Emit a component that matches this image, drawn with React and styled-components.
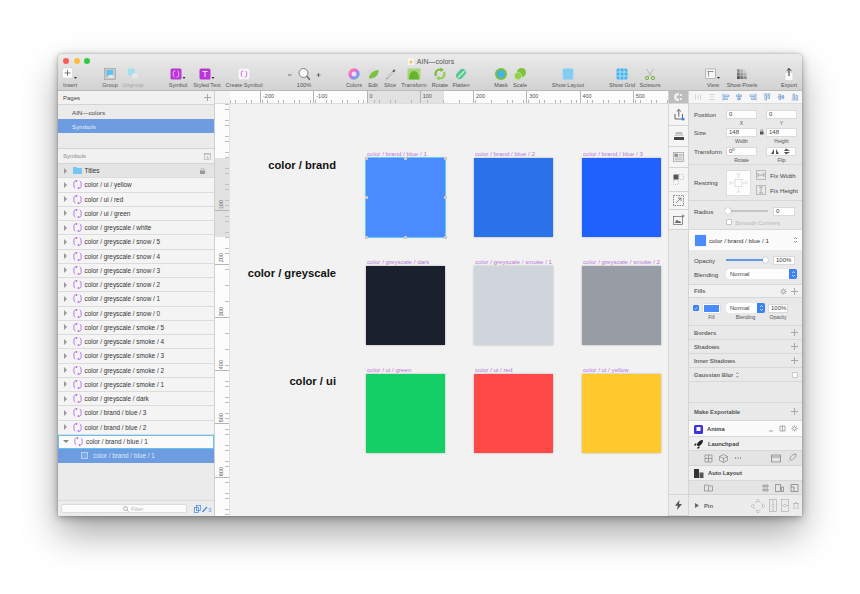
import React from 'react';
import styled, { createGlobalStyle } from 'styled-components';

const GlobalStyle = createGlobalStyle`
  html, body { margin: 0; padding: 0; background: #fff; }
  body { font-family: "Liberation Sans", Arial, sans-serif; color: #333; -webkit-font-smoothing: antialiased; }
  * { box-sizing: border-box; }
`;

const Page = styled.div`
  width: 860px;
  height: 594px;
  padding: 54px 58px 0;
  overflow: hidden;
  background: #fff;
`;

const Win = styled.div`
  width: 744px;
  height: 462px;
  border-radius: 4px 4px 2px 2px;
  overflow: hidden;
  display: flex;
  flex-direction: column;
  background: #f2f2f2;
  box-shadow: 0 18px 36px rgba(0, 0, 0, 0.34), 0 2px 8px rgba(0, 0, 0, 0.3), 0 0 2px rgba(0, 0, 0, 0.3);
`;

/* ---------- title bar and toolbar ---------- */

const Toolbar = styled.header`
  height: 37px;
  flex: none;
  background: linear-gradient(#ebebeb, #d2d2d2);
  border-bottom: 1px solid #b9b9b9;
`;

const TitleBar = styled.div`
  height: 12px;
  position: relative;
  display: flex;
  align-items: center;
  justify-content: center;
  gap: 3px;
  padding: 2px 0 0 2px;
  font-size: 7px;
  color: #555;
`;

const Lights = styled.div`
  position: absolute;
  left: 5px;
  top: 4px;
  display: flex;
  gap: 4.5px;
`;

const Light = styled.span`
  width: 6px;
  height: 6px;
  border-radius: 50%;
  background: ${(p) => p.$c};
`;

const ToolRow = styled.div`
  display: flex;
  height: 25px;
`;

const Tool = styled.div`
  width: ${(p) => p.$w}px;
  margin-left: ${(p) => p.$gap}px;
  flex: none;
  display: flex;
  flex-direction: column;
  align-items: center;
  justify-content: flex-end;
  padding-bottom: 3px;
  gap: 1px;
  font-size: 5.6px;
  line-height: 6px;
  white-space: nowrap;
  color: ${(p) => (p.$dim ? '#a5a5a5' : '#555')};
`;

const ToolIcon = styled.div`
  height: 15px;
  display: flex;
  align-items: center;
  justify-content: center;
`;

const Sym = ({ size = 9, color = '#b060e0', sw = 0.9 }) => (
  <svg width={size} height={size} viewBox="0 0 10 10" fill="none" stroke={color} strokeWidth={sw}>
    <path d="M4.5 1H3C1.700 1 1 1.800 1 3v3.500C1 7.700 1.500 8.500 2.500 9" />
    <path d="M3.200 .2L4.700 1 3.200 2" />
    <path d="M5.500 9H7C8.300 9 9 8.200 9 7V3.500C9 2.300 8.500 1.500 7.500 1" />
    <path d="M6.800 8.200L5.300 9 6.800 9.800" />
  </svg>
);

const Svg = ({ w = 14, h = 14, vb, children }) => (
  <svg width={w} height={h} viewBox={vb || `0 0 ${w} ${h}`} fill="none">{children}</svg>
);

const toolIcons = {
  insert: (
    <Svg w={16} h={14}>
      <rect x="0.5" y="1" width="10" height="10" rx="1.5" fill="#fff" stroke="#ccc" strokeWidth=".5" />
      <path d="M5.5 3v6M2.5 6h6" stroke="#555" strokeWidth=".8" />
      <polygon points="12,10 15,10 13.5,12" fill="#333" />
    </Svg>
  ),
  group: (
    <Svg>
      <rect x="1.5" y="1.5" width="11" height="11" fill="#c9c9c9" stroke="#a8a8a8" strokeWidth=".8" />
      <rect x="3.5" y="3" width="6.5" height="6" fill="#5cc4f0" />
      <rect x="5.5" y="8" width="5" height="3" fill="#e8e8e8" />
    </Svg>
  ),
  ungroup: (
    <Svg>
      <rect x="2" y="1.5" width="7" height="7" rx="1" fill="#a6dcee" />
      <rect x="6" y="6.5" width="6" height="5" fill="#e5e5e5" />
    </Svg>
  ),
  symbol: (
    <Svg w={16}>
      <rect x=".5" y="1.5" width="11" height="11" rx="1.5" fill="#b937d6" />
      <path d="M5.500 4H4.500C3.700 4 3.300 4.500 3.300 5.200V8.500C3.300 9.200 3.700 9.700 4.500 10M6.500 10H7.500C8.300 10 8.700 9.500 8.700 8.800V5.500C8.700 4.800 8.300 4.300 7.500 4" stroke="#f2d0fa" strokeWidth=".8" />
      <polygon points="12.5,10 15.5,10 14,12" fill="#333" />
    </Svg>
  ),
  text: (
    <Svg w={16}>
      <rect x=".5" y="1.5" width="11" height="11" rx="1.5" fill="#b937d6" />
      <path d="M3.500 4.500h5M6 4.500v5.500" stroke="#fff" strokeWidth=".9" />
      <polygon points="12.5,10 15.5,10 14,12" fill="#333" />
    </Svg>
  ),
  create: (
    <Svg>
      <rect x="1.5" y="1.5" width="11" height="11" rx="1.5" fill="#fafafa" stroke="#ddd" strokeWidth=".5" />
      <path d="M6.500 4H5.500C4.700 4 4.300 4.500 4.300 5.200V8.500C4.300 9.200 4.700 9.700 5.500 10M7.500 10H8.500C9.300 10 9.700 9.500 9.700 8.800V5.500C9.700 4.800 9.300 4.300 8.500 4" stroke="#c65fe6" strokeWidth=".9" />
    </Svg>
  ),
  zoom: (
    <Svg w={34}>
      <path d="M1 8h3.500M29.500 8h4M31.500 6v4" stroke="#555" strokeWidth=".8" />
      <circle cx="16.5" cy="6" r="4.5" fill="#f7f7f7" stroke="#666" strokeWidth=".8" />
      <path d="M19.800 9.200l3 3.600" stroke="#555" strokeWidth="1.3" />
    </Svg>
  ),
  colors: (
    <Svg>
      <defs>
        <linearGradient id="cw" x1="0" y1="0" x2="1" y2="1">
          <stop offset="0" stopColor="#f9a13a" />
          <stop offset=".35" stopColor="#f06bd0" />
          <stop offset=".65" stopColor="#8c8cf5" />
          <stop offset="1" stopColor="#5fdc8c" />
        </linearGradient>
      </defs>
      <circle cx="7" cy="7" r="5.7" fill="url(#cw)" />
      <circle cx="7" cy="7" r="2.5" fill="#fff" opacity=".75" />
    </Svg>
  ),
  edit: (
    <Svg>
      <circle cx="6.500" cy="7" r="5.500" fill="#d9d9d9" />
      <path d="M3 11.500C3 7 7 3.500 12.500 3C13 8 9 12 3 11.500Z" fill="#7fc241" />
    </Svg>
  ),
  slice: (
    <Svg>
      <path d="M3 12L11 2.500l1.200 1L5 11.500Z" fill="#f4f4f4" stroke="#777" strokeWidth=".5" />
      <path d="M9.500 4.500L11 2.500l1.200 1L10.800 5.500Z" fill="#555" />
    </Svg>
  ),
  transform: (
    <Svg w={16} h={14}>
      <rect x="1.500" y="1.500" width="13" height="11" fill="#a7d677" />
      <path d="M3 12.500C3 7 5 4 8 4s5 3 5 8.500Z" fill="#66b32e" />
    </Svg>
  ),
  rotate: (
    <Svg>
      <path d="M3 9A4.500 4.500 0 0 1 8 2.600" stroke="#76bd3a" strokeWidth="2.100" />
      <path d="M11 5A4.500 4.500 0 0 1 6 11.400" stroke="#8ccf4c" strokeWidth="2.100" />
      <polygon points="7.5,0.5 11,3 7.5,5" fill="#76bd3a" />
      <polygon points="6.5,9 3,11 6.5,13.5" fill="#8ccf4c" />
    </Svg>
  ),
  flatten: (
    <Svg>
      <rect x="1.500" y="3.500" width="11" height="7" rx="3.500" transform="rotate(-45 7 7)" fill="#53c79c" />
      <path d="M4 10.500L10.500 4" stroke="#d9f2b0" strokeWidth="1.200" />
    </Svg>
  ),
  mask: (
    <Svg>
      <circle cx="7" cy="7" r="6" fill="#7cbe3e" />
      <rect x="3.500" y="3.500" width="7" height="7" rx="1.500" fill="#3fb4ee" />
    </Svg>
  ),
  scale: (
    <Svg>
      <circle cx="8.500" cy="5.500" r="4.500" fill="#7cc23d" />
      <circle cx="5" cy="9" r="3.700" fill="#93d14d" stroke="#d5eeb5" strokeWidth=".5" />
    </Svg>
  ),
  layout: (
    <Svg>
      <rect x="1.500" y="1.500" width="11" height="11" rx="1.500" fill="#8fd1f2" />
      <path d="M4 1.500v11M7 1.500v11M10 1.500v11" stroke="#5db5e6" strokeWidth=".6" />
    </Svg>
  ),
  grid: (
    <Svg>
      <rect x="1.500" y="1.500" width="11" height="11" rx="1.500" fill="#49b3ec" />
      <path d="M5 1.500v11M9 1.500v11M1.500 5h11M1.500 9h11" stroke="#d5effb" strokeWidth=".7" />
    </Svg>
  ),
  scissors: (
    <Svg>
      <path d="M3.500 2l5 7.500M10.500 2l-5 7.500" stroke="#b9b9b9" strokeWidth="1" />
      <circle cx="4" cy="11" r="1.600" stroke="#6db339" />
      <circle cx="10" cy="11" r="1.600" stroke="#6db339" />
    </Svg>
  ),
  view: (
    <Svg w={16}>
      <rect x=".8" y="2" width="9.500" height="9.500" fill="#f6f6f6" stroke="#888" strokeWidth=".5" />
      <path d="M2.500 4.500h6M3.500 4.500v5" stroke="#666" strokeWidth=".7" />
      <polygon points="12,10 15,10 13.5,12" fill="#333" />
    </Svg>
  ),
  pixels: (
    <Svg>
      <defs>
        <linearGradient id="px" x1="1" y1="0" x2="0" y2="1">
          <stop offset="0" stopColor="#eee" />
          <stop offset="1" stopColor="#444" />
        </linearGradient>
      </defs>
      <rect x="2" y="2" width="10" height="10" fill="url(#px)" />
      <path d="M5.300 2v10M8.600 2v10M2 5.300h10M2 8.600h10" stroke="#fff" strokeWidth=".3" />
    </Svg>
  ),
  exportIcon: (
    <Svg>
      <rect x="3.500" y="6" width="7" height="7" fill="#f8f8f8" />
      <path d="M7 9V1.500M4.700 3.800L7 1.500l2.300 2.300" stroke="#222" strokeWidth=".9" />
    </Svg>
  ),
};

const tools = [
  ['Insert', 2, 20, 'insert'],
  ['Group', 19, 22, 'group'],
  ['Ungroup', 1, 22, 'ungroup', true],
  ['Symbol', 23, 22, 'symbol'],
  ['Styled Text', 1, 34, 'text'],
  ['Create Symbol', 1, 38, 'create'],
  ['100%', 22, 38, 'zoom'],
  ['Colors', 21, 20, 'colors'],
  ['Edit', 1, 16, 'edit'],
  ['Slice', 1, 16, 'slice'],
  ['Transform', 1, 30, 'transform'],
  ['Rotate', 1, 20, 'rotate'],
  ['Flatten', 1, 20, 'flatten'],
  ['Mask', 20, 20, 'mask'],
  ['Scale', 1, 16, 'scale'],
  ['Show Layout', 20, 40, 'layout'],
  ['Show Grid', 19, 30, 'grid'],
  ['Scissors', 1, 24, 'scissors'],
  ['View', 41, 20, 'view'],
  ['Show Pixels', 1, 36, 'pixels'],
  ['Export', 17, 24, 'exportIcon'],
];

/* ---------- body ---------- */

const Body = styled.div`
  flex: 1;
  min-height: 0;
  display: flex;
`;

const Left = styled.aside`
  width: 157px;
  flex: none;
  display: flex;
  flex-direction: column;
  background: #ebebeb;
  border-right: 1px solid #d0d0d0;
`;

const PanelHead = styled.div`
  height: ${(p) => p.$h}px;
  flex: none;
  display: flex;
  align-items: center;
  justify-content: space-between;
  padding: 0 3px 0 5px;
  font-size: 6px;
  background: #f1f1f1;
  color: ${(p) => p.$c || '#444'};
  border-bottom: 1px solid #d4d4d4;
`;

const PageItem = styled.div`
  height: 14px;
  display: flex;
  align-items: center;
  padding-left: 14px;
  font-size: 6.2px;
  color: ${(p) => (p.$on ? '#e8f0fb' : '#444')};
  background: ${(p) => (p.$on ? '#6d9de0' : 'transparent')};
`;

const PagesGap = styled.div`
  height: 16px;
  flex: none;
  border-bottom: 1px solid #d4d4d4;
`;

const LayerList = styled.div`
  flex: 1;
`;

const Layer = styled.div`
  height: 14.26px;
  display: flex;
  align-items: center;
  font-size: 6.4px;
  white-space: nowrap;
  padding-left: ${(p) => (p.$child ? 23 : 6)}px;
  color: ${(p) => (p.$child ? '#dfe9f9' : '#333')};
  background: ${(p) => (p.$child ? '#6d9de0' : p.$sel ? '#fbfbfb' : p.$folder ? '#e4e4e4' : '#f4f4f4')};
  border-bottom: 1px solid ${(p) => (p.$child ? '#6d9de0' : '#dcdcdc')};
  outline: ${(p) => (p.$sel ? '1px solid #66c0ec' : 'none')};
  outline-offset: -1px;
`;

const Arrow = styled.span`
  width: 0;
  height: 0;
  flex: none;
  margin-right: 5.5px;
  ${(p) =>
    p.$open
      ? 'border-left: 3px solid transparent; border-right: 3px solid transparent; border-top: 3px solid #8a8a8a; margin-left: -1px; margin-right: 5px;'
      : 'border-top: 3px solid transparent; border-bottom: 3px solid transparent; border-left: 3.5px solid #999;'}
`;

const LayerIcon = styled.span`
  width: 9px;
  height: 9px;
  flex: none;
  margin-right: 3px;
  display: flex;
  align-items: center;
  justify-content: center;
`;

const ChildBox = styled.span`
  width: 7px;
  height: 7px;
  flex: none;
  margin-right: 5px;
  border: 0.7px solid #b9cff0;
  background: #7ea9e5;
`;

const Lock = styled.span`
  margin-left: auto;
  margin-right: 9px;
  display: flex;
`;

const FilterBar = styled.div`
  height: 16px;
  flex: none;
  display: flex;
  align-items: center;
  gap: 7px;
  padding: 0 2px 0 3px;
  background: #ececec;
  border-top: 1px solid #dadada;
`;

const FilterBox = styled.div`
  flex: 1;
  height: 9px;
  border-radius: 2px;
  background: #fbfbfb;
  border: 0.5px solid #dcdcdc;
  display: flex;
  align-items: center;
  justify-content: center;
  gap: 2px;
  padding-left: 18px;
  font-size: 5.5px;
  color: #b8b8b8;
`;

/* ---------- canvas ---------- */

const Center = styled.main`
  flex: 1;
  min-width: 0;
  display: grid;
  grid-template-columns: 15px 1fr;
  grid-template-rows: 13px 1fr;
  background: #f2f2f2;
`;

const RulerCorner = styled.div`
  background: #f4f4f4;
  border-bottom: 1px solid #ddd;
`;

const HRuler = styled.div`
  display: flex;
  padding-left: 30px;
  overflow: hidden;
  background:
    repeating-linear-gradient(90deg, #b5b5b5 0 0.6px, transparent 0.6px 5.33px) 0 100% / 100% 3px no-repeat,
    linear-gradient(90deg, transparent 137px, #e2e2e2 137px 214px, transparent 214px),
    #fcfcfc;
  border-bottom: 1px solid #ddd;
`;

const HTick = styled.div`
  width: 53.25px;
  flex: none;
  padding: 2px 0 0 2px;
  font-size: 5.5px;
  line-height: 6px;
  color: #555;
  border-left: 0.6px solid #b5b5b5;
`;

const VRuler = styled.div`
  display: flex;
  flex-direction: column;
  overflow: hidden;
  padding-top: 54px;
  background:
    repeating-linear-gradient(180deg, #c0c0c0 0 0.6px, transparent 0.6px 5.33px) 100% 0 / 4px 100% no-repeat,
    linear-gradient(180deg, transparent 54px, #e2e2e2 54px 133px, transparent 133px),
    #fcfcfc;
  border-right: 1px solid #e2e2e2;
`;

const VTick = styled.div`
  height: 53.3px;
  flex: none;
  display: flex;
  align-items: flex-end;
  justify-content: flex-start;
  padding-bottom: 1px;
  border-bottom: 0.6px solid #b5b5b5;
`;

const VLabel = styled.span`
  writing-mode: vertical-rl;
  transform: rotate(180deg);
  font-size: 5.5px;
  line-height: 8px;
  color: #555;
  margin-left: 2px;
`;

const Canvas = styled.div`
  padding: 54px 7px 0 0;
  display: grid;
  grid-template-columns: 106px 79px 79px 79px;
  grid-auto-rows: 79px;
  row-gap: 29px;
  column-gap: 29px;
  justify-content: end;
`;

const RowTitle = styled.div`
  margin-right: 1px;
  padding-top: 1px;
  text-align: right;
  font-size: 11.2px;
  font-weight: 700;
  line-height: 13px;
  color: #111;
  white-space: nowrap;
  direction: ltr;
  display: flex;
  justify-content: flex-end;
`;

const Artboard = styled.div`
  position: relative;
  background: ${(p) => p.$c};
  box-shadow: 0 0 2px rgba(0, 0, 0, 0.28);
  outline: ${(p) => (p.$sel ? '1px solid #6dc9f2' : 'none')};
`;

const ArtLabel = styled.span`
  position: absolute;
  left: 1px;
  top: -8.5px;
  font-size: 6.2px;
  line-height: 7px;
  color: #b678d8;
  white-space: nowrap;
`;

const Handle = styled.span`
  position: absolute;
  width: 3px;
  height: 3px;
  margin: -1.5px 0 0 -1.5px;
  left: ${(p) => p.$x}%;
  top: ${(p) => p.$y}%;
  background: #e6e6e6;
  border: 0.4px solid #c4c4c4;
`;

/* ---------- tool column ---------- */

const Tabs = styled.div`
  width: 21px;
  flex: none;
  display: flex;
  flex-direction: column;
  background: #ececec;
  border-left: 1px solid #d5d5d5;
`;

const Tab = styled.div`
  height: ${(p) => p.$h}px;
  flex: none;
  display: flex;
  align-items: center;
  justify-content: center;
  background: ${(p) => p.$bg || '#f5f5f5'};
  border-bottom: 1px solid #d5d5d5;
  border-right: 1px solid #d5d5d5;
`;

const TabFill = styled.div`
  flex: 1;
  border-right: 1px solid #d5d5d5;
  border-bottom: 1px solid #d5d5d5;
`;

/* ---------- inspector ---------- */

const Inspector = styled.aside`
  width: 113px;
  flex: none;
  display: flex;
  flex-direction: column;
  background: #e9e9e9;
  font-size: 6.2px;
  color: #444;
`;

const AlignBar = styled.div`
  height: 13px;
  flex: none;
  display: flex;
  align-items: center;
  gap: 5.8px;
  padding-left: 5px;
  background: #f6f6f6;
  border-bottom: 1px solid #ddd;
`;

const Section = styled.div`
  height: ${(p) => p.$h}px;
  flex: none;
  padding: ${(p) => p.$pad || '0 4px 0 5px'};
  display: flex;
  flex-direction: column;
  border-bottom: 1px solid #d8d8d8;
`;

const FieldRow = styled.div`
  height: ${(p) => p.$h || 10}px;
  margin-top: ${(p) => p.$mt || 0}px;
  flex: none;
  display: flex;
  align-items: center;
`;

const Label = styled.span`
  width: ${(p) => p.$w || 32}px;
  flex: none;
  white-space: nowrap;
  color: ${(p) => p.$c || '#444'};
`;

const Input = styled.div`
  width: ${(p) => p.$w || 31}px;
  height: 9px;
  flex: none;
  margin-left: ${(p) => p.$ml || 0}px;
  padding-left: 2px;
  font-size: 6px;
  line-height: 9px;
  background: #fdfdfd;
  border: 0.4px solid #dadada;
  display: flex;
  align-items: center;
  justify-content: space-between;
`;

const SubLabel = styled.span`
  width: ${(p) => p.$w || 31}px;
  margin-left: ${(p) => p.$ml || 0}px;
  flex: none;
  text-align: center;
  font-size: 5px;
  color: #555;
`;

const Select = styled.div`
  width: ${(p) => p.$w}px;
  height: 10px;
  flex: none;
  margin-left: ${(p) => p.$ml || 0}px;
  border-radius: 2px;
  background: #fdfdfd;
  box-shadow: 0 0 0.6px rgba(0, 0, 0, 0.35);
  display: flex;
  align-items: center;
  justify-content: space-between;
  padding-left: 4px;
  font-size: 6px;
`;

const SelectArrows = styled.span`
  width: 8px;
  height: 10px;
  border-radius: 0 2px 2px 0;
  background: #3b82ee;
  display: flex;
  align-items: center;
  justify-content: center;
`;

const StyleRow = styled.div`
  height: 20px;
  flex: none;
  background: #fbfbfb;
  display: flex;
  align-items: center;
  padding: 0 4px 0 6px;
  gap: 3px;
  font-size: 6.2px;
  color: #333;
`;

const Swatch = styled.span`
  width: ${(p) => p.$w || 11}px;
  height: ${(p) => p.$h || 11}px;
  margin-left: ${(p) => p.$ml || 0}px;
  flex: none;
  background: #4a8cff;
  border: ${(p) => (p.$frame ? '1.2px solid #fff' : 'none')};
  box-shadow: 0 0 0.8px rgba(0, 0, 0, 0.35);
`;

const Slider = styled.div`
  width: ${(p) => p.$w}px;
  height: 1.4px;
  flex: none;
  position: relative;
  background: ${(p) => (p.$full ? '#5d9cec' : '#c4c4c4')};
`;

const Knob = styled.span`
  position: absolute;
  top: -2px;
  left: ${(p) => (p.$end ? 'auto' : '-1px')};
  right: ${(p) => (p.$end ? '-1px' : 'auto')};
  width: 5.5px;
  height: 5.5px;
  border-radius: 50%;
  background: #fff;
  box-shadow: 0 0 1px rgba(0, 0, 0, 0.5);
`;

const Plus = styled.span`
  margin-left: ${(p) => (p.$inline ? 0 : 'auto')};
  width: 7px;
  height: 7px;
  flex: none;
  background:
    linear-gradient(#a8a8a8, #a8a8a8) center / 7px 1px no-repeat,
    linear-gradient(#a8a8a8, #a8a8a8) center / 1px 7px no-repeat;
`;

const HeadRow = styled.div`
  height: ${(p) => p.$h || 14}px;
  flex: none;
  display: flex;
  align-items: center;
  padding: 0 4px 0 5px;
  font-weight: 700;
  font-size: 5.8px;
  color: ${(p) => p.$c || '#666'};
  background: ${(p) => p.$bg || 'transparent'};
  border-bottom: 1px solid #d8d8d8;
`;

const ResizeBox = styled.div`
  width: 25px;
  height: 26px;
  flex: none;
  background: #fdfdfd;
  border: 0.4px solid #dcdcdc;
  display: flex;
  align-items: center;
  justify-content: center;
`;

const FixCol = styled.div`
  margin-left: 5px;
  display: flex;
  flex-direction: column;
  gap: 5px;
`;

const FixRow = styled.div`
  display: flex;
  align-items: center;
  gap: 4px;
  white-space: nowrap;
`;

const FixIcon = styled.span`
  width: 10px;
  height: 10px;
  flex: none;
  border: 0.5px solid #bbb;
  display: flex;
  align-items: center;
  justify-content: center;
`;

const Check = styled.span`
  width: 6px;
  height: 6px;
  flex: none;
  margin-left: ${(p) => p.$ml || 0};
  margin-right: ${(p) => p.$mr || 0}px;
  border-radius: 1px;
  background: ${(p) => (p.$on ? '#3b82ee' : '#fff')};
  border: 0.4px solid ${(p) => (p.$on ? '#3b82ee' : '#c4c4c4')};
  display: flex;
  align-items: center;
  justify-content: center;
`;

const IconGroup = styled.span`
  display: flex;
  align-items: center;
  gap: ${(p) => p.$gap || 0}px;
  margin-left: ${(p) => p.$ml || 0};
  margin-right: ${(p) => p.$mr || 0}px;
`;

const PluginRow = styled.div`
  height: ${(p) => p.$h}px;
  flex: none;
  display: flex;
  align-items: center;
  gap: 4px;
  padding: 0 4px 0 5px;
  font-size: 5.8px;
  font-weight: 700;
  color: #444;
  background: ${(p) => p.$bg || '#fbfbfb'};
  border-bottom: 0.5px solid #d8d8d8;
`;

const PluginTools = styled.div`
  height: ${(p) => p.$h}px;
  flex: none;
  display: flex;
  align-items: center;
  justify-content: space-between;
  padding: ${(p) => p.$pad};
  background: #e4e4e4;
  border-bottom: 0.5px solid #d4d4d4;
`;

const PinRow = styled.div`
  flex: 1;
  display: flex;
  align-items: center;
  gap: 3px;
  padding: 0 3px 0 6px;
  font-size: 5.8px;
  font-weight: 700;
  color: #666;
  background: #ececec;
`;

const PinName = styled.span`
  margin-left: 2px;
`;

const Updown = ({ c = '#555' }) => (
  <svg width="5" height="8" viewBox="0 0 5 8" fill="none" stroke={c} strokeWidth=".7">
    <path d="M1 3l1.500-1.500L4 3M1 5l1.500 1.500L4 5" />
  </svg>
);

const Gear = ({ size = 7, c = '#999' }) => (
  <svg width={size} height={size} viewBox="0 0 10 10" fill="none" stroke={c}>
    <circle cx="5" cy="5" r="2.400" strokeWidth="1.200" />
    <path d="M5 .5v2M5 7.500v2M.5 5h2M7.500 5h2M1.800 1.800l1.400 1.400M6.800 6.800l1.400 1.400M1.800 8.200l1.400-1.400M6.800 3.200l1.400-1.400" strokeWidth="1" />
  </svg>
);

const Glyph = ({ d, w = 8, h = 8, c = '#777', sw = 0.6 }) => (
  <svg width={w} height={h} viewBox={`0 0 ${w} ${h}`} fill="none" stroke={c} strokeWidth={sw}>
    <path d={d} />
  </svg>
);

const alignGlyphs = [
  ['M1.500 1v6M6.500 1v6M4 2v4', '#c3c3c3'],
  ['M1 1.500h6M1 6.500h6M2 4h4', '#c3c3c3'],
  ['M1 .5v7M2 2h5v1.500H2zM2 5h3.500v1.500H2z', '#5b8fd0'],
  ['M4 .5v7M1.500 2h5v1.500h-5zM2.500 5h3v1.500h-3z', '#5b8fd0'],
  ['M7 .5v7M1 2h5v1.500H1zM2.500 5H6v1.500H2.500z', '#5b8fd0'],
  ['M.5 1h7M2 2v5h1.500V2zM5 2v3.500h1.500V2z', '#5b8fd0'],
  ['M.5 4h7M2 1.500v5h1.500v-5zM5 2.500v3h1.500v-3z', '#5b8fd0'],
  ['M.5 7h7M2 1v5h1.500V1zM5 2.500V6h1.500V2.500z', '#5b8fd0'],
];

const rulerH = ['-200', '-100', '0', '100', '200', '300', '400', '500'];
const rulerV = ['100', '200', '300', '400', '500', '600'];

const layers = [
  'color / ui / yellow', 'color / ui / red', 'color / ui / green', 'color / greyscale / white',
  'color / greyscale / snow / 5', 'color / greyscale / snow / 4', 'color / greyscale / snow / 3',
  'color / greyscale / snow / 2', 'color / greyscale / snow / 1', 'color / greyscale / snow / 0',
  'color / greyscale / smoke / 5', 'color / greyscale / smoke / 4', 'color / greyscale / smoke / 3',
  'color / greyscale / smoke / 2', 'color / greyscale / smoke / 1', 'color / greyscale / dark',
  'color / brand / blue / 3', 'color / brand / blue / 2',
];

const boardRows = [
  ['color / brand', [
    ['color / brand / blue / 1', '#4a8cff', true],
    ['color / brand / blue / 2', '#2b72ea'],
    ['color / brand / blue / 3', '#2060fb'],
  ]],
  ['color / greyscale', [
    ['color / greyscale / dark', '#1a202c'],
    ['color / greyscale / smoke / 1', '#d0d5dc'],
    ['color / greyscale / smoke / 2', '#979ca5'],
  ]],
  ['color / ui', [
    ['color / ui / green', '#13cf65'],
    ['color / ui / red', '#ff4949'],
    ['color / ui / yellow', '#ffc82c'],
  ]],
];

const handles = [[0, 0], [50, 0], [100, 0], [0, 50], [100, 50], [0, 100], [50, 100], [100, 100]];

const tabs = [
  [22, <svg key="a" width="12" height="13" viewBox="0 0 12 13" fill="none"><path d="M2 6v5h7.500V6M5.800 8.500V1.500M3.700 3.500l2.100-2 2.100 2" stroke="#444" strokeWidth=".8" /><circle cx="10" cy="11" r="1.600" fill="#3b82ee" /></svg>],
  [21, <svg key="b" width="12" height="10" viewBox="0 0 12 10"><path d="M3 1h6l1 2.500H2Z" fill="#bbb" /><rect x="1.500" y="4" width="9" height="1" fill="#ccc" /><rect x="1" y="6" width="10" height="3" fill="#444" /></svg>],
  [21, <svg key="c" width="11" height="10" viewBox="0 0 11 10" fill="none" stroke="#999" strokeWidth=".7"><rect x=".5" y=".5" width="10" height="9" /><rect x="1.800" y="2" width="3" height="2.500" fill="#888" /><path d="M6 2.500h3.500M6 4h3.500M1.800 6h7.700M1.800 7.800h7.700" /></svg>],
  [24, <svg key="d" width="11" height="11" viewBox="0 0 11 11" fill="none"><rect x=".5" y=".5" width="5" height="5" fill="#555" /><rect x="6" y=".5" width="4.500" height="5" stroke="#999" strokeWidth=".5" strokeDasharray="1 1" /><rect x=".5" y="6" width="5" height="4.500" stroke="#999" strokeWidth=".5" strokeDasharray="1 1" /></svg>],
  [18, <svg key="e" width="11" height="11" viewBox="0 0 11 11" fill="none" stroke="#555" strokeWidth=".7"><rect x=".5" y=".5" width="10" height="10" strokeDasharray="1.500 1" /><path d="M3 8l4.500-4.500M5 3h3v3" /></svg>],
  [20, <svg key="f" width="12" height="11" viewBox="0 0 12 11" fill="none" stroke="#666" strokeWidth=".7"><rect x=".5" y="2.500" width="9" height="8" /><path d="M2 9l2-3 1.500 2 1-1L8 9" fill="#666" /><path d="M10 .5v3M8.500 2h3" /></svg>],
];

export default function App() {
  return (
    <Page>
      <GlobalStyle />
      <Win>
        <Toolbar>
          <TitleBar>
            <Lights>
              <Light $c="#fc5b57" />
              <Light $c="#fdbc40" />
              <Light $c="#34c84a" />
            </Lights>
            <svg width="6" height="7" viewBox="0 0 6 7"><rect width="6" height="7" fill="#f5f5f5" /><circle cx="3" cy="4" r="1.700" fill="#f6c76a" /></svg>
            AIN—colors
          </TitleBar>
          <ToolRow>
            {tools.map(([label, gap, w, icon, dim]) => (
              <Tool key={label} $gap={gap} $w={w} $dim={dim}>
                <ToolIcon>{toolIcons[icon]}</ToolIcon>
                {label}
              </Tool>
            ))}
          </ToolRow>
        </Toolbar>
        <Body>
          <Left>
            <PanelHead $h={14}>
              Pages
              <Plus />
            </PanelHead>
            <PageItem>AIN—colors</PageItem>
            <PageItem $on>Symbols</PageItem>
            <PagesGap />
            <PanelHead $h={15} $c="#8a8a8a">
              Symbols
              <svg width="7" height="7" viewBox="0 0 7 7" fill="none" stroke="#999" strokeWidth=".5"><rect x=".3" y=".3" width="6.400" height="6.400" /><path d="M1 1.500h5M2.500 5L3.500 3.500 4.500 5z" /></svg>
            </PanelHead>
            <LayerList>
              <Layer $folder>
                <Arrow />
                <LayerIcon>
                  <svg width="9" height="7" viewBox="0 0 9 7"><path d="M0 0h3.500l1 1H9v6H0Z" fill="#72c7f5" /></svg>
                </LayerIcon>
                Titles
                <Lock>
                  <svg width="5" height="6" viewBox="0 0 5 6" fill="none"><rect y="2.500" width="5" height="3.500" fill="#999" /><path d="M1 2.500V1.500a1.500 1.500 0 0 1 3 0v1" stroke="#999" strokeWidth=".6" /></svg>
                </Lock>
              </Layer>
              {layers.map((name) => (
                <Layer key={name}>
                  <Arrow />
                  <LayerIcon><Sym /></LayerIcon>
                  {name}
                </Layer>
              ))}
              <Layer $sel>
                <Arrow $open />
                <LayerIcon><Sym /></LayerIcon>
                color / brand / blue / 1
              </Layer>
              <Layer $child>
                <ChildBox />
                color / brand / blue / 1
              </Layer>
            </LayerList>
            <FilterBar>
              <FilterBox>
                <svg width="6" height="6" viewBox="0 0 6 6" fill="none" stroke="#888" strokeWidth=".6"><circle cx="2.500" cy="2.500" r="2" /><path d="M4 4l1.700 1.700" /></svg>
                Filter
              </FilterBox>
              <svg width="18" height="8" viewBox="0 0 18 8" fill="none" stroke="#3b82ee" strokeWidth=".7"><rect x=".5" y="2.500" width="4" height="5" /><rect x="2.500" y=".5" width="4" height="5" /><path d="M8.500 7L13 2" strokeWidth="1.200" /><text x="14.500" y="7" fontSize="5" fill="#3b82ee" stroke="none" fontFamily="Liberation Sans">0</text></svg>
            </FilterBar>
          </Left>

          <Center>
            <RulerCorner />
            <HRuler>
              {rulerH.map((n) => (
                <HTick key={n}>{n}</HTick>
              ))}
            </HRuler>
            <VRuler>
              {rulerV.map((n) => (
                <VTick key={n}><VLabel>{n}</VLabel></VTick>
              ))}
            </VRuler>
            <Canvas>
              {boardRows.map(([title, boards]) => (
                <React.Fragment key={title}>
                  <RowTitle>{title}</RowTitle>
                  {boards.map(([name, color, sel]) => (
                    <Artboard key={name} $c={color} $sel={sel}>
                      <ArtLabel>{name}</ArtLabel>
                      {sel && handles.map(([x, y]) => <Handle key={`${x}-${y}`} $x={x} $y={y} />)}
                    </Artboard>
                  ))}
                </React.Fragment>
              ))}
            </Canvas>
          </Center>

          <Tabs>
            <Tab $h={13} $bg="#bdbdbd">
              <svg width="9" height="8" viewBox="0 0 9 8"><path d="M4 0a4 4 0 0 0 0 8h1V5.500H4a1.500 1.500 0 0 1 0-3h1V0Z" fill="#eee" /><rect x="6" y="1" width="2" height="2" fill="#eee" /><rect x="6" y="5" width="2" height="2" fill="#eee" /></svg>
            </Tab>
            {tabs.map(([h, icon], i) => (
              <Tab key={i} $h={h}>{icon}</Tab>
            ))}
            <TabFill />
            <Tab $h={21} $bg="#ececec">
              <svg width="7" height="10" viewBox="0 0 7 10"><path d="M4.500 0L0 5.800h2.800L2 10l5-6H4Z" fill="#555" /></svg>
            </Tab>
          </Tabs>

          <Inspector>
            <AlignBar>
              {alignGlyphs.map(([d, c]) => (
                <Glyph key={d} d={d} c={c} />
              ))}
            </AlignBar>
            <Section $h={61} $pad="5px 4px 0 5px">
              <FieldRow>
                <Label>Position</Label>
                <Input>0</Input>
                <Input $ml={9}>0</Input>
              </FieldRow>
              <FieldRow $h={7}>
                <SubLabel $ml={32}>X</SubLabel>
                <SubLabel $ml={9}>Y</SubLabel>
              </FieldRow>
              <FieldRow $mt={1}>
                <Label>Size</Label>
                <Input>148</Input>
                <svg width="9" height="6" viewBox="0 0 9 6"><rect x="3" y="2.500" width="3.500" height="3" fill="#555" /><path d="M3.700 2.500V1.500a1 1 0 0 1 2 0v1" fill="none" stroke="#555" strokeWidth=".5" /></svg>
                <Input>148</Input>
              </FieldRow>
              <FieldRow $h={7}>
                <SubLabel $ml={32}>Width</SubLabel>
                <SubLabel $ml={9}>Height</SubLabel>
              </FieldRow>
              <FieldRow $mt={2}>
                <Label>Transform</Label>
                <Input>0º</Input>
                <Input $ml={9} $w={30}>
                  <svg width="26" height="7" viewBox="0 0 26 7"><path d="M5 1L2 6h3ZM7 1l3 5H7Z" fill="#555" /><path d="M15 3h6l-4-2.500ZM15 4h6l-4 2.500Z" fill="#555" /></svg>
                </Input>
              </FieldRow>
              <FieldRow $h={7}>
                <SubLabel $ml={32}>Rotate</SubLabel>
                <SubLabel $ml={9}>Flip</SubLabel>
              </FieldRow>
            </Section>
            <Section $h={36}>
              <FieldRow $h={35}>
                <Label>Resizing</Label>
                <ResizeBox>
                  <svg width="19" height="20" viewBox="0 0 19 20" fill="none" stroke="#ccc" strokeWidth=".6"><rect x="6" y="6.500" width="7" height="7" /><path d="M9.500 1v4M7.500 1h4M9.500 15v4M7.500 19h4M1 10h4M1 8v4M14 10h4M18 8v4" /></svg>
                </ResizeBox>
                <FixCol>
                  <FixRow>
                    <FixIcon><Glyph d="M1 2v4M7 2v4M1 4h6" c="#888" /></FixIcon>
                    Fix Width
                  </FixRow>
                  <FixRow>
                    <FixIcon><Glyph d="M2 1h4M2 7h4M4 1v6" c="#888" /></FixIcon>
                    Fix Height
                  </FixRow>
                </FixCol>
              </FieldRow>
            </Section>
            <Section $h={29} $pad="5px 4px 0 5px">
              <FieldRow $h={10}>
                <Label $w={32}>Radius</Label>
                <Slider $w={42}><Knob /></Slider>
                <Input $ml={5} $w={22}>0</Input>
              </FieldRow>
              <FieldRow $h={10} $mt={1}>
                <Check $ml="32px" $mr={3} />
                <Label $c="#b4b4b4">Smooth Corners</Label>
              </FieldRow>
            </Section>
            <StyleRow>
              <Swatch />
              color / brand / blue / 1
              <IconGroup $ml="auto"><Updown /></IconGroup>
            </StyleRow>
            <Section $h={35} $pad="5px 4px 0 5px">
              <FieldRow $h={10}>
                <Label>Opacity</Label>
                <Slider $w={41} $full><Knob $end /></Slider>
                <Input $ml={6} $w={22}>100%</Input>
              </FieldRow>
              <FieldRow $h={10} $mt={4}>
                <Label>Blending</Label>
                <Select $w={71}>
                  Normal
                  <SelectArrows><Updown c="#fff" /></SelectArrows>
                </Select>
              </FieldRow>
            </Section>
            <HeadRow $h={13} $bg="#f1f1f1">
              Fills
              <IconGroup $ml="auto" $mr={4}><Gear /></IconGroup>
              <Plus $inline />
            </HeadRow>
            <Section $h={28} $pad="5px 4px 0 4px">
              <FieldRow $h={10}>
                <Check $on>
                  <Glyph w={5} h={5} d="M1 2.500l1 1.200L4 1" c="#fff" sw=".7" />
                </Check>
                <Swatch $w={17} $h={9} $frame $ml={4} />
                <Select $w={39} $ml={6}>
                  Normal
                  <SelectArrows><Updown c="#fff" /></SelectArrows>
                </Select>
                <Input $ml={3} $w={20}>100%</Input>
              </FieldRow>
              <FieldRow $h={8}>
                <SubLabel $ml={10} $w={17}>Fill</SubLabel>
                <SubLabel $ml={6} $w={39}>Blending</SubLabel>
                <SubLabel $ml={3} $w={20}>Opacity</SubLabel>
              </FieldRow>
            </Section>
            <HeadRow>Borders<Plus /></HeadRow>
            <HeadRow>Shadows<Plus /></HeadRow>
            <HeadRow>Inner Shadows<Plus /></HeadRow>
            <HeadRow>
              Gaussian Blur
              <IconGroup $ml="2px"><Updown c="#777" /></IconGroup>
              <Check $ml="auto" />
            </HeadRow>
            <Section $h={21} />
            <HeadRow $h={18} $c="#555">Make Exportable<Plus /></HeadRow>
            <PluginRow $h={16}>
              <svg width="9" height="10" viewBox="0 0 9 10"><rect x="0" y="1" width="9" height="9" rx="1.500" fill="#3b33e0" /><rect x="2.500" y="3" width="4" height="4" fill="#fff" /></svg>
              Anima
              <IconGroup $ml="auto" $gap={5}>
                <Glyph w={6} h={7} d="M1 6h4" c="#666" />
                <Glyph w={7} h={7} d="M1 1h5v5H1zM3.500 1v5" c="#777" />
                <Gear />
              </IconGroup>
            </PluginRow>
            <PluginRow $h={14} $bg="#efefef">
              <svg width="10" height="10" viewBox="0 0 10 10"><path d="M9 1C6 1 3.500 3 2.800 6l1.300 1.300C7 6.500 9 4 9 1ZM2.500 4.500H1L0 6.500h2ZM5.500 7.500V9l-2 1V8Z" fill="#222" /></svg>
              Launchpad
            </PluginRow>
            <PluginTools $h={15} $pad="0 5px 0 15px">
              <IconGroup $gap={6}>
                <Glyph w={9} h={9} d="M1 1h7v7H1zM4.500 1v7M1 4.500h7" c="#777" />
                <Glyph w={9} h={9} d="M4.500.5L8.500 2.500v4L4.500 8.500.5 6.500v-4zM.5 2.500l4 2 4-2M4.500 4.500v4" c="#777" />
                <Glyph w={8} h={8} d="M1 4h1M3.500 4h1M6 4h1" c="#555" sw="1.100" />
              </IconGroup>
              <IconGroup $gap={6}>
                <Glyph w={10} h={9} d="M.5 1h9v7h-9zM.5 3h9" c="#666" />
                <Glyph w={10} h={10} d="M9 1C6 1 3.500 3 2.800 6l1.300 1.300C7 6.500 9 4 9 1ZM2 8.500l1-1" c="#777" />
              </IconGroup>
            </PluginTools>
            <PluginRow $h={15} $bg="#efefef">
              <svg width="10" height="9" viewBox="0 0 10 9"><rect y="0" width="5" height="9" fill="#333" /><rect x="5.500" y="3.500" width="4" height="5.500" fill="#555" /></svg>
              Auto Layout
            </PluginRow>
            <PluginTools $h={14} $pad="0 3px 0 15px">
              <Glyph w={9} h={9} d="M.5 2h3.500l1 1h3.500v5H.500zM4.500 3v5" c="#777" />
              <IconGroup $gap={6}>
                <Glyph w={7} h={8} d="M1 1h2v2H1zM4 1h2v2H4zM1 5h2v2H1zM4 5h2v2H4z" c="#777" />
                <Glyph w={9} h={8} d="M.5 .5h5v7h-5zM6.500 3h2v4.500h-2z" c="#666" />
                <Glyph w={9} h={8} d="M1 .5h7v7H1zM1 3h3v4.500" c="#666" />
              </IconGroup>
            </PluginTools>
            <PinRow>
              <svg width="4" height="5" viewBox="0 0 4 5"><path d="M0 0l4 2.500L0 5Z" fill="#666" /></svg>
              <PinName>Pin</PinName>
              <IconGroup $ml="auto" $gap={4}>
                <svg width="14" height="14" viewBox="0 0 14 14" fill="none" stroke="#999" strokeWidth=".5"><circle cx="7" cy="7" r="4.500" strokeDasharray="2 1.500" /><circle cx="7" cy="1.500" r="1.200" fill="#fff" /><circle cx="7" cy="12.500" r="1.200" fill="#fff" /><circle cx="1.500" cy="7" r="1.200" fill="#fff" /><circle cx="12.500" cy="7" r="1.200" fill="#fff" /></svg>
                <svg width="8" height="13" viewBox="0 0 8 13" fill="none" stroke="#999" strokeWidth=".5"><rect x=".3" y=".3" width="7.400" height="12.400" /><path d="M4 1v11" /><circle cx="4" cy="6.500" r="1.200" fill="#fff" /></svg>
                <svg width="8" height="13" viewBox="0 0 8 13" fill="none" stroke="#999" strokeWidth=".5"><rect x=".3" y=".3" width="7.400" height="12.400" /><path d="M1 6.500h6" /><circle cx="4" cy="6.500" r="1.200" fill="#fff" /></svg>
                <svg width="6" height="7" viewBox="0 0 6 7" fill="none" stroke="#b0b0b0" strokeWidth=".7"><path d="M0 1.500h6M1 1.500V7h4V1.500M2 .5h2" /></svg>
              </IconGroup>
            </PinRow>
          </Inspector>
        </Body>
      </Win>
    </Page>
  );
}
